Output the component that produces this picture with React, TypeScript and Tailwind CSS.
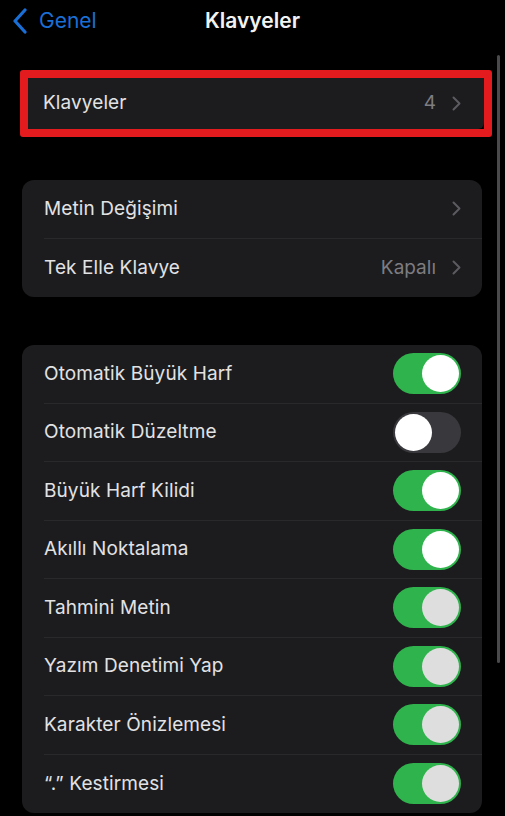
import React from "react";

const font = { fontFamily: "Inter, 'Noto Sans', sans-serif" };

function Chevron() {
  return (
    <svg width="9" height="15" viewBox="0 0 9 15" className="ml-[16px]">
      <path d="M1.5 1.5 L7.5 7.5 L1.5 13.5" fill="none" stroke="#5b5b60" strokeWidth="2" strokeLinecap="round" strokeLinejoin="round" />
    </svg>
  );
}

function Toggle({ on, dim }: { on: boolean; dim?: boolean }) {
  if (!on) {
    return (
      <div className="flex h-[41px] w-[68px] items-center rounded-full bg-[#39393d] px-[2px]">
        <div className="h-[37px] w-[37px] rounded-full bg-white" />
      </div>
    );
  }
  return (
    <div className="flex h-[41px] w-[68px] items-center justify-end rounded-full bg-[#2fb34c] px-[2px]">
      <div className={`h-[37px] w-[37px] rounded-full ${dim ? "bg-[#dedede]" : "bg-white"}`} />
    </div>
  );
}

function Row({ label, value, chevron, toggle, last }: { label: string; value?: string; chevron?: boolean; toggle?: React.ReactNode; last?: boolean }) {
  return (
    <div className="flex h-[58.5px] items-center pl-[22px]">
      <div className={`flex h-full flex-1 items-center ${last ? "" : "border-b border-[#29292c]"}`}>
        <span className="flex-1 text-[19px] tracking-[0.1px] text-[#e2e2e4]">{label}</span>
        {value && <span className="text-[19px] text-[#7d7d82]">{value}</span>}
        {chevron && <Chevron />}
        {toggle}
        <div className="w-[21px]" />
      </div>
    </div>
  );
}

export default function App() {
  const toggles: [string, boolean, boolean][] = [
    ["Otomatik Büyük Harf", true, false],
    ["Otomatik Düzeltme", false, false],
    ["Büyük Harf Kilidi", true, false],
    ["Akıllı Noktalama", true, false],
    ["Tahmini Metin", true, true],
    ["Yazım Denetimi Yap", true, true],
    ["Karakter Önizlemesi", true, true],
    ["“.” Kestirmesi", true, true],
  ];
  return (
    <div className="relative h-[816px] w-[505px] overflow-hidden bg-black" style={font}>
      <div className="relative flex h-[42px] items-center">
        <div className="flex items-center pl-[12px] text-[#1a6fd6]">
          <svg width="16" height="26" viewBox="0 0 16 26">
            <path d="M13 2 L3 13 L13 24" fill="none" stroke="#1a6fd6" strokeWidth="3.2" strokeLinecap="round" strokeLinejoin="round" />
          </svg>
          <span className="ml-[11px] text-[21px]">Genel</span>
        </div>
        <span className="absolute left-1/2 -translate-x-1/2 text-[21px] font-semibold text-[#f2f2f2]">Klavyeler</span>
      </div>

      <div className="absolute right-[5px] top-[55px] h-[608px] w-[3px] rounded-full bg-[#4a4a4c]" />

      <div className="ml-[20px] mt-[28px] w-[472px] rounded-[3px] border-[8px] border-[#e31b1f]">
        <div className="flex h-[51px] items-center rounded-br-[6px] bg-[#1c1c1e] pl-[15px] pr-[23px]">
          <span className="flex-1 text-[19px] tracking-[0.1px] text-[#e2e2e4]">Klavyeler</span>
          <span className="text-[19px] text-[#7d7d82]">4</span>
          <Chevron />
        </div>
      </div>

      <div className="ml-[22px] mt-[43px] w-[460px] overflow-hidden rounded-[12px] bg-[#1c1c1e]">
        <Row label="Metin Değişimi" chevron />
        <Row label="Tek Elle Klavye" value="Kapalı" chevron last />
      </div>

      <div className="ml-[22px] mt-[48px] w-[460px] overflow-hidden rounded-[12px] bg-[#1c1c1e]">
        {toggles.map(([label, on, dim], i) => (
          <Row key={label} label={label} toggle={<Toggle on={on} dim={dim} />} last={i === toggles.length - 1} />
        ))}
      </div>
    </div>
  );
}
